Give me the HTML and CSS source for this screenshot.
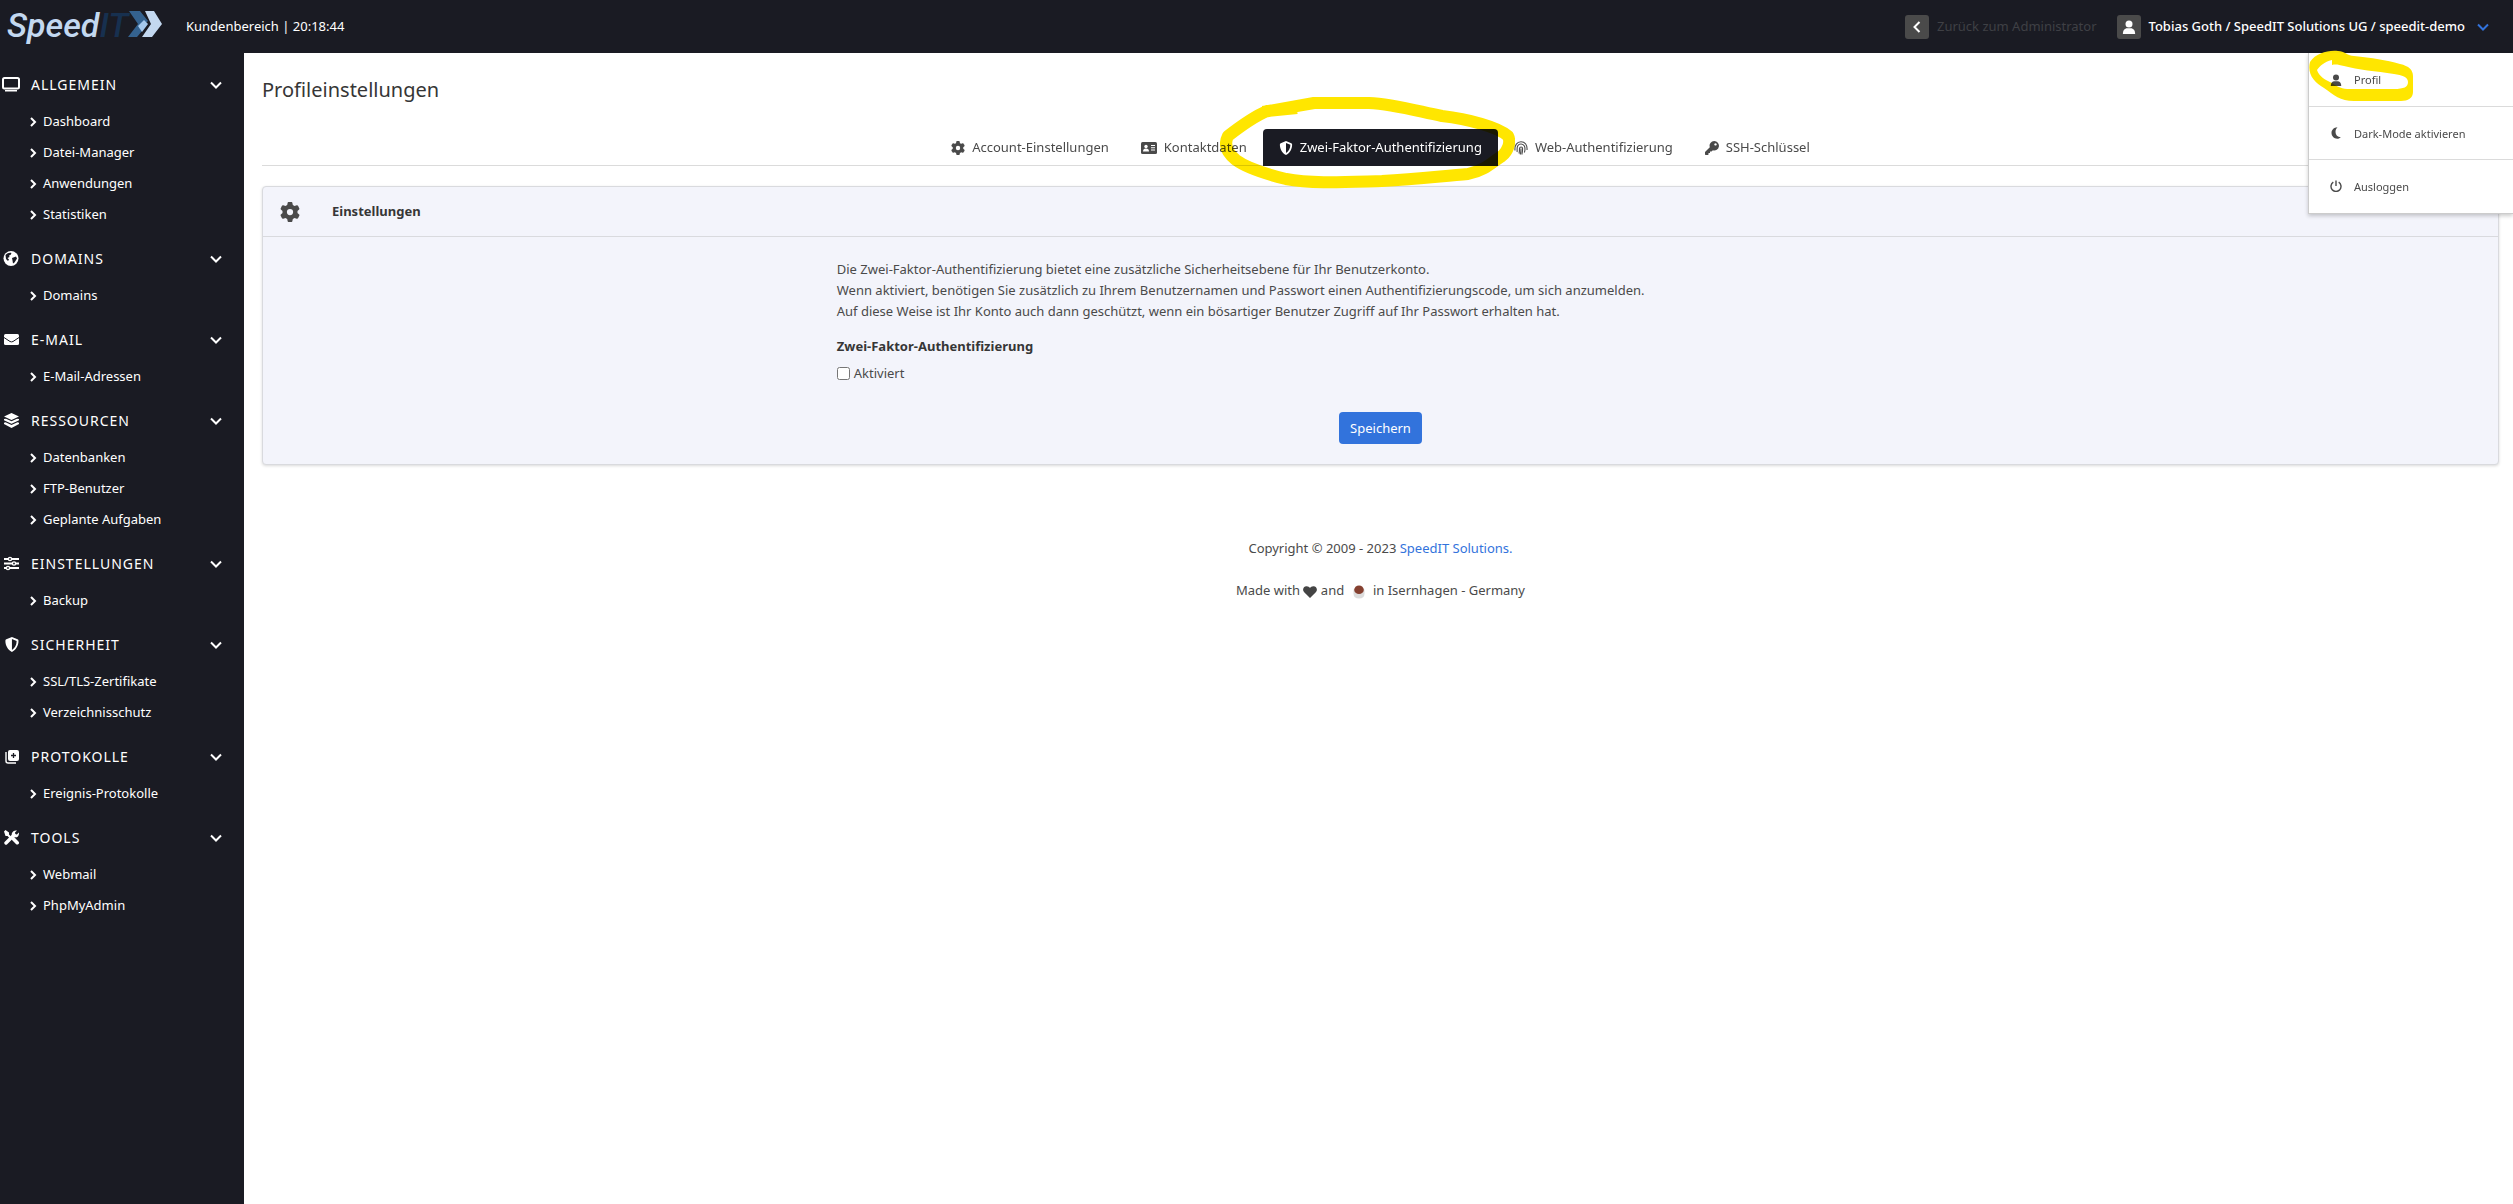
FILE: index.html
```
<!DOCTYPE html>
<html lang="de">

<head>
  <meta charset="UTF-8">
  <meta name="viewport" content="width=device-width, initial-scale=1.0">

  <title>Profileinstellungen</title>
  <link rel="stylesheet" href="styles.css">
</head>

<body>
  <!-- Icons used more than once -->
  <svg class="sprite" aria-hidden="true">
    <symbol id="chevron-right" viewBox="0 0 8 10"><path d="M2 1l4 4-4 4" fill="none" stroke="currentColor" stroke-width="2"/></symbol>
    <symbol id="chevron-down" viewBox="0 0 12 8"><path d="M1 1.500l5 5 5-5" fill="none" stroke="currentColor" stroke-width="2"/></symbol>
    <symbol id="gear" viewBox="0 0 512 512"><path fill="currentColor" d="M496 166c3 9 1 19-6 25l-43 40a190 190 0 0 1 0 50l43 40c7 6 9 16 6 25-5 12-10 23-16 34l-5 8c-7 11-14 22-23 32-6 7-16 10-24 7l-56-18c-13 10-28 19-44 25l-12 57c-2 9-9 16-18 18a264 264 0 0 1-84 0c-9-2-16-9-18-18l-12-57c-16-6-31-15-44-25l-56 18c-8 3-18 0-24-7-9-10-16-21-23-32l-5-8c-6-11-11-22-16-34-3-9-1-19 6-25l43-40a190 190 0 0 1 0-50l-43-40c-7-6-9-16-6-25 5-12 10-23 16-34l5-8c7-11 14-22 23-32 6-7 16-10 24-7l56 18c13-10 28-19 44-25l12-57c2-9 9-16 18-18a264 264 0 0 1 84 0c9 2 16 9 18 18l12 57c16 6 31 15 44 25l56-18c8-3 18 0 24 7 9 10 16 21 23 32l5 8c6 11 11 22 16 34zM256 336a80 80 0 1 0 0-160 80 80 0 0 0 0 160z"/></symbol>
    <symbol id="shield" viewBox="0 0 16 16"><path fill="currentColor" fill-rule="evenodd" d="M8 0l6 2.500q1 .4 1 1.500C15 9 12.500 13.800 8 16 3.500 13.800 1 9 1 4q0-1.100 1-1.500zM8 2.200v11.600c3.200-1.800 5-5.600 5-9.500z"/></symbol>
    <symbol id="user" viewBox="0 0 16 16"><circle cx="8" cy="4.500" r="4" fill="currentColor"/><path fill="currentColor" d="M1 16c0-4 2-6.500 5-6.500h4c3 0 5 2.500 5 6.500z"/></symbol>
  </svg>

  <header class="topbar">
    <a class="logo" href="#" aria-label="SpeedIT">
      <svg width="164" height="48" viewBox="0 0 164 48">
        <text class="logo-text" x="7" y="34">Speed<tspan class="logo-it">IT</tspan></text>
        <path fill="#34628f" d="M129 8h11l8 10-8 7 2 3-5 6h-9l10-13z"/>
        <path fill="#c3d8f0" d="M145 8h9l8 13-10 13h-10l9-13z"/>
        <path fill="#a5c8ec" d="M144 17l4 4-6 8-4-6z"/>
      </svg>
    </a>
    <span class="area">Kundenbereich | <time>20:18:44</time></span>
    <a class="back" href="#">
      <span class="tile"><svg width="8" height="12" viewBox="0 0 8 12"><path d="M6.500 1l-5 5 5 5" fill="none" stroke="#fff" stroke-width="2"/></svg></span>
      Zurück zum Administrator
    </a>
    <button class="account" type="button">
      <span class="tile"><svg width="14" height="16"><use href="#user"/></svg></span>
      Tobias Goth / SpeedIT Solutions UG / speedit-demo
      <svg class="caret" width="12" height="8"><use href="#chevron-down"/></svg>
    </button>

    <div class="menu">
      <a href="#"><svg width="12" height="12"><use href="#user"/></svg>Profil</a>
      <a href="#"><svg width="12" height="12" viewBox="0 0 12 12"><path fill="currentColor" d="M7.500.3C3.800.5 1.500 3 1.500 6s2.500 5.700 5.700 5.700c1.500 0 2.800-.6 3.600-1.500C7.500 10 5.500 8 5.500 5c0-2 .8-3.500 2-4.700z"/></svg>Dark-Mode aktivieren</a>
      <a href="#"><svg width="12" height="12" viewBox="0 0 12 12"><path d="M3.300 2.200a5 5 0 1 0 5.400 0M6 .5v5.500" fill="none" stroke="currentColor" stroke-width="1.400"/></svg>Ausloggen</a>
      <svg class="marker marker-profile" width="106" height="54" viewBox="0 0 106 54"><path fill="#ffe600" fill-rule="evenodd" d="M2 12C8 3 20 0 30 1c6 0 10 5 16 5 18 2 32 4 46 8 9 2 13 6 13 12v16c0 6-5 9-12 9H46C32 51 26 45 16 38 6 32-1 24 2 12zM9 20c2 6 8 10 15 13 6 4 10 6 18 6h44c10 0 14-2 14-7s-6-7-14-8c-18-3-36-4-50-8-5-1-8-2-12-1v-5c-8 2-12 6-15 10z"/></svg>
    </div>
  </header>

  <div class="layout">
    <nav class="sidebar">
      <section>
        <h2><svg width="18" height="15" viewBox="0 0 18 15"><rect x="1" y="1" width="16" height="10.500" rx="1.500" fill="none" stroke="#fff" stroke-width="2"/><path fill="#fff" d="M3 13h12v1.500H3z"/></svg>Allgemein<svg class="toggle" width="12" height="8"><use href="#chevron-down"/></svg></h2>
        <a href="#"><svg width="8" height="10"><use href="#chevron-right"/></svg>Dashboard</a>
        <a href="#"><svg width="8" height="10"><use href="#chevron-right"/></svg>Datei-Manager</a>
        <a href="#"><svg width="8" height="10"><use href="#chevron-right"/></svg>Anwendungen</a>
        <a href="#"><svg width="8" height="10"><use href="#chevron-right"/></svg>Statistiken</a>
      </section>
      <section>
        <h2><svg width="18" height="15" viewBox="0 0 18 15"><circle cx="9" cy="7.500" r="7.500" fill="#fff"/><path fill="#1a1b23" d="M3.500 4c2-2 4-2.500 6-2L8.500 4 7 4.500l.5 1.500-2 1L7 8.500 6 10 4 8zM10 7l4-1.500 1 2-2.500 4-1.500 1-.5-3z"/></svg>Domains<svg class="toggle" width="12" height="8"><use href="#chevron-down"/></svg></h2>
        <a href="#"><svg width="8" height="10"><use href="#chevron-right"/></svg>Domains</a>
      </section>
      <section>
        <h2><svg width="18" height="15" viewBox="0 0 18 15"><rect x="2" y="2" width="15" height="11" rx="1.500" fill="#fff"/><path d="M2 5.500l6 4q1.500.8 3 0l6-4" fill="none" stroke="#1a1b23"/></svg>E-Mail<svg class="toggle" width="12" height="8"><use href="#chevron-down"/></svg></h2>
        <a href="#"><svg width="8" height="10"><use href="#chevron-right"/></svg>E-Mail-Adressen</a>
      </section>
      <section>
        <h2><svg width="18" height="15" viewBox="0 0 18 15"><path fill="#fff" d="M9.500 0L17 3.500 9.500 7 2 3.500zM2 6l2-.3 5.500 2.600L15 5.700l2 .3v1.300l-7.500 3.500L2 7.300zM2 9.700l1.500-.5 6 2.800 6-2.800 1.500.5V11l-7.500 4L2 11z"/></svg>Ressourcen<svg class="toggle" width="12" height="8"><use href="#chevron-down"/></svg></h2>
        <a href="#"><svg width="8" height="10"><use href="#chevron-right"/></svg>Datenbanken</a>
        <a href="#"><svg width="8" height="10"><use href="#chevron-right"/></svg>FTP-Benutzer</a>
        <a href="#"><svg width="8" height="10"><use href="#chevron-right"/></svg>Geplante Aufgaben</a>
      </section>
      <section>
        <h2><svg width="18" height="15" viewBox="0 0 18 15"><path d="M2 3h15M2 7.500h15M2 12h15" stroke="#fff" stroke-width="1.800"/><g fill="#1a1b23" stroke="#fff" stroke-width="1.400"><circle cx="8" cy="3" r="1.600"/><circle cx="12" cy="7.500" r="1.600"/><circle cx="6" cy="12" r="1.600"/></g></svg>Einstellungen<svg class="toggle" width="12" height="8"><use href="#chevron-down"/></svg></h2>
        <a href="#"><svg width="8" height="10"><use href="#chevron-right"/></svg>Backup</a>
      </section>
      <section>
        <h2><svg width="18" height="15" viewBox="-1 0 16 16"><use href="#shield" width="16" height="16"/></svg>Sicherheit<svg class="toggle" width="12" height="8"><use href="#chevron-down"/></svg></h2>
        <a href="#"><svg width="8" height="10"><use href="#chevron-right"/></svg>SSL/TLS-Zertifikate</a>
        <a href="#"><svg width="8" height="10"><use href="#chevron-right"/></svg>Verzeichnisschutz</a>
      </section>
      <section>
        <h2><svg width="18" height="15" viewBox="0 0 18 15"><rect x="6" y="1" width="11" height="11" rx="2" fill="#fff"/><path d="M11.500 4v5M9 6.500h5" stroke="#1a1b23" stroke-width="1.300"/><path d="M4 3v9q0 2 2 2h8" fill="none" stroke="#fff" stroke-width="1.400"/></svg>Protokolle<svg class="toggle" width="12" height="8"><use href="#chevron-down"/></svg></h2>
        <a href="#"><svg width="8" height="10"><use href="#chevron-right"/></svg>Ereignis-Protokolle</a>
      </section>
      <section>
        <h2><svg width="18" height="15" viewBox="0 0 18 15"><path d="M4 13l8-8" stroke="#fff" stroke-width="3.400" stroke-linecap="round"/><path fill="#fff" d="M15 .6l-2 2 .3 1.600 1.600.3 2-2c.5 3-1.200 5.200-4 5-2.500-.3-3.600-2-3-4.200.6-2 3-3.400 5.100-2.700zM2 1.500L3.500 0 7 2.500v2l3 3L8.500 9l-3-3h-2z"/><path d="M11.500 9l4 4" stroke="#1a1b23" stroke-width="5"/><path d="M11.500 9l3.700 3.700" stroke="#fff" stroke-width="3.600" stroke-linecap="round"/></svg>Tools<svg class="toggle" width="12" height="8"><use href="#chevron-down"/></svg></h2>
        <a href="#"><svg width="8" height="10"><use href="#chevron-right"/></svg>Webmail</a>
        <a href="#"><svg width="8" height="10"><use href="#chevron-right"/></svg>PhpMyAdmin</a>
      </section>
    </nav>

    <main class="content">
      <h1>Profileinstellungen</h1>

      <nav class="tabs">
        <a href="#"><svg width="14" height="14"><use href="#gear"/></svg>Account-Einstellungen</a>
        <a href="#"><svg width="16" height="14" viewBox="0 0 16 14"><rect y="1" width="16" height="12" rx="1.500" fill="currentColor"/><g fill="#fff"><circle cx="5" cy="5.500" r="1.700"/><path d="M2 10.500c0-2 1-3 3-3s3 1 3 3zM10 4h4v1h-4zM10 6.300h4v1h-4zM10 8.600h4v1h-4z"/></g></svg>Kontaktdaten</a>
        <a class="active" href="#"><svg width="14" height="14"><use href="#shield"/></svg>Zwei-Faktor-Authentifizierung</a>
        <a href="#"><svg width="14" height="14" viewBox="0 0 14 14"><g fill="none" stroke="currentColor" stroke-width="1.100"><path d="M1 9.500C.5 4 3 .8 7 .8S13.500 4 13 9M3 11c.5-2-.5-4 .8-6.300C5.300 2.300 9 2.400 10.400 5c.9 2 .6 4.500 0 6.500M5 12.500c.6-2 .4-3 .5-5C5.700 5.500 8.500 5.500 8.600 7.500c0 2-.2 3.700-.8 6M7 7.500c0 2 0 3.500-.8 6"/></g></svg>Web-Authentifizierung</a>
        <a href="#"><svg width="14" height="14" viewBox="0 0 14 14"><path fill="currentColor" fill-rule="evenodd" d="M9.300 0a4.700 4.700 0 1 1-1.400 9.200L6.500 10.500H5V12H3.500v1.500L3 14H.5L0 13.500V11l4.800-4.800A4.700 4.700 0 0 1 9.300 0zm1.200 2.200a1.200 1.200 0 1 0 .01 0z"/></svg>SSH-Schlüssel</a>
        <svg class="marker marker-tab" width="296" height="92" viewBox="0 0 296 92"><path fill="none" stroke="#ffe600" stroke-width="12" stroke-linejoin="round" d="M78 11L48 14C34 20 18 32 9 39c-4 8-2 16 8 24 12 9 34 15 50 19 26 5 60 3 96 2 36-2 60-5 86-7 18-4 24-12 34-18 6-5 9-14 6-20-10-9-40-17-66-20C198 14 174 7 150 6H95L44 15"/></svg>
      </nav>

      <form class="card">
        <div class="card-head">
          <svg width="20" height="20"><use href="#gear"/></svg>
          <h3>Einstellungen</h3>
        </div>
        <div class="card-body">
          <div class="column">
            <p>Die Zwei-Faktor-Authentifizierung bietet eine zusätzliche Sicherheitsebene für Ihr Benutzerkonto.<br>
              Wenn aktiviert, benötigen Sie zusätzlich zu Ihrem Benutzernamen und Passwort einen Authentifizierungscode, um sich anzumelden.<br>
              Auf diese Weise ist Ihr Konto auch dann geschützt, wenn ein bösartiger Benutzer Zugriff auf Ihr Passwort erhalten hat.</p>
            <h4>Zwei-Faktor-Authentifizierung</h4>
            <label><input type="checkbox" name="2fa">Aktiviert</label>
          </div>
          <button class="save" type="submit">Speichern</button>
        </div>
      </form>

      <footer class="footer">
        <p>Copyright © 2009 - 2023 <a href="#">SpeedIT Solutions.</a></p>
        <p>Made with
          <svg width="14" height="12" viewBox="0 0 14 12"><path fill="#444" d="M7 12L1.200 6.300C-1 4 .2.500 3.500.300 5 .2 6.200 1 7 2 7.800 1 9 .2 10.500.300 13.800.5 15 4 12.800 6.300z"/></svg>
          and
          <svg class="cup" width="14" height="14" viewBox="0 0 14 14"><path fill="#dcdcdc" d="M1.500 4.500h11v4q0 5-5.500 5t-5.500-5z"/><ellipse cx="7" cy="4.800" rx="4.800" ry="4.300" fill="#854030"/></svg>
          in Isernhagen - Germany</p>
      </footer>
    </main>
  </div>
</body>

</html>
```
FILE: styles.css
```
* {
  box-sizing: border-box;
}

body {
  margin: 0;
  font-family: "Noto Sans", "Open Sans", sans-serif;
  font-size: 13px;
  line-height: 21px;
  color: #4a4a4a;
  background-color: #fff;
}

h1, h2, h3, h4, p {
  margin: 0;
}

a {
  color: inherit;
  text-decoration: none;
}

button {
  font: inherit;
  cursor: pointer;
}

.sprite {
  position: absolute;
  width: 0;
  height: 0;
}

/* Top bar */
.topbar {
  position: relative;
  display: flex;
  align-items: center;
  height: 53px;
  padding-right: 24px;
  background-color: #1a1b23;
  color: #fff;
}

.logo {
  display: flex;
  width: 186px;
}

.logo-text {
  font: italic 500 34px Roboto, sans-serif;
  fill: #c3d8f0;
}

.logo-it {
  fill: #17304f;
}

.back {
  display: flex;
  align-items: center;
  gap: 8px;
  margin-left: auto;
  color: #3f4045;
}

.tile {
  display: flex;
  align-items: center;
  justify-content: center;
  width: 24px;
  height: 24px;
  border-radius: 3px;
  background-color: #4a4a4a;
  color: #fff;
}

.account {
  display: flex;
  align-items: center;
  gap: 8px;
  margin-left: 20px;
  padding: 0;
  border: none;
  background: none;
  color: #fff;
  font-weight: 500;
}

.caret {
  margin-left: 4px;
  color: #3273dc;
}

/* Account menu */
.menu {
  position: absolute;
  top: 53px;
  right: 0;
  z-index: 2;
  width: 205px;
  padding-bottom: 1px;
  border: 1px solid #ccc;
  border-width: 0 0 1px 1px;
  background-color: #fff;
  box-shadow: 0 2px 4px rgba(0, 0, 0, 0.2);
  color: #4a4a4a;
  font-size: 11px;
}

.menu a {
  display: flex;
  align-items: center;
  gap: 12px;
  height: 53px;
  padding-left: 21px;
}

.menu a + a {
  border-top: 1px solid #dbdbdb;
}

/* Highlighter strokes */
.marker {
  position: absolute;
  mix-blend-mode: multiply;
  pointer-events: none;
}

.marker-profile {
  top: -3px;
  left: -1px;
}

.marker-tab {
  top: -32px;
  left: calc(50% - 162px);
}

/* Sidebar */
.layout {
  display: flex;
  min-height: calc(100vh - 53px);
}

.sidebar {
  flex: none;
  width: 244px;
  padding-top: 16px;
  background-color: #1a1b23;
  color: #fff;
}

.sidebar section {
  padding-bottom: 13px;
}

.sidebar h2 {
  display: flex;
  align-items: center;
  gap: 11px;
  height: 31px;
  padding: 0 22px 0 2px;
  margin-bottom: 6px;
  font-size: 14px;
  font-weight: 400;
  letter-spacing: 1px;
  text-transform: uppercase;
}

.sidebar .toggle {
  margin-left: auto;
}

.sidebar a {
  display: flex;
  align-items: center;
  gap: 6px;
  height: 31px;
  padding-left: 29px;
}

/* Content */
.content {
  flex: 1;
  padding: 22px 14px 22px 18px;
}

h1 {
  font-size: 20px;
  font-weight: 400;
  line-height: 30px;
  color: #363636;
}

.tabs {
  position: relative;
  z-index: 1;
  display: flex;
  justify-content: center;
  margin: 24px 0 20px;
  border-bottom: 1px solid #dbdbdb;
}

.tabs a {
  display: flex;
  align-items: center;
  gap: 7px;
  height: 37px;
  margin-bottom: -1px;
  padding: 0 16px;
}

.tabs .active {
  border-radius: 4px 4px 0 0;
  background-color: #1a1b23;
  color: #fff;
}

.card {
  border: 1px solid #d9dade;
  border-radius: 4px;
  background-color: #f3f4fb;
  box-shadow: 0 1px 3px rgba(0, 0, 0, 0.15);
}

.card-head {
  display: flex;
  align-items: center;
  gap: 32px;
  height: 50px;
  padding-left: 17px;
  border-bottom: 1px solid #d9dade;
}

.card-head h3 {
  font-size: 13px;
  color: #363636;
}

.card-body {
  display: flex;
  flex-direction: column;
  align-items: center;
  padding: 22px 30px 20px;
}

.column {
  width: 50%;
}

.column h4 {
  margin-top: 14px;
  font-size: 13px;
  color: #363636;
}

.column label {
  display: flex;
  align-items: center;
  gap: 4px;
  margin-top: 6px;
}

.column input {
  width: 13px;
  height: 13px;
  margin: 0;
}

.save {
  height: 32px;
  margin-top: 28px;
  padding: 0 11px;
  border: none;
  border-radius: 4px;
  background-color: #3273dc;
  color: #fff;
}

.footer {
  display: flex;
  flex-direction: column;
  gap: 21px;
  padding-top: 73px;
  text-align: center;
}

.footer a {
  color: #3273dc;
}

.footer svg {
  vertical-align: middle;
}

.cup {
  margin: 0 4px;
}
```
